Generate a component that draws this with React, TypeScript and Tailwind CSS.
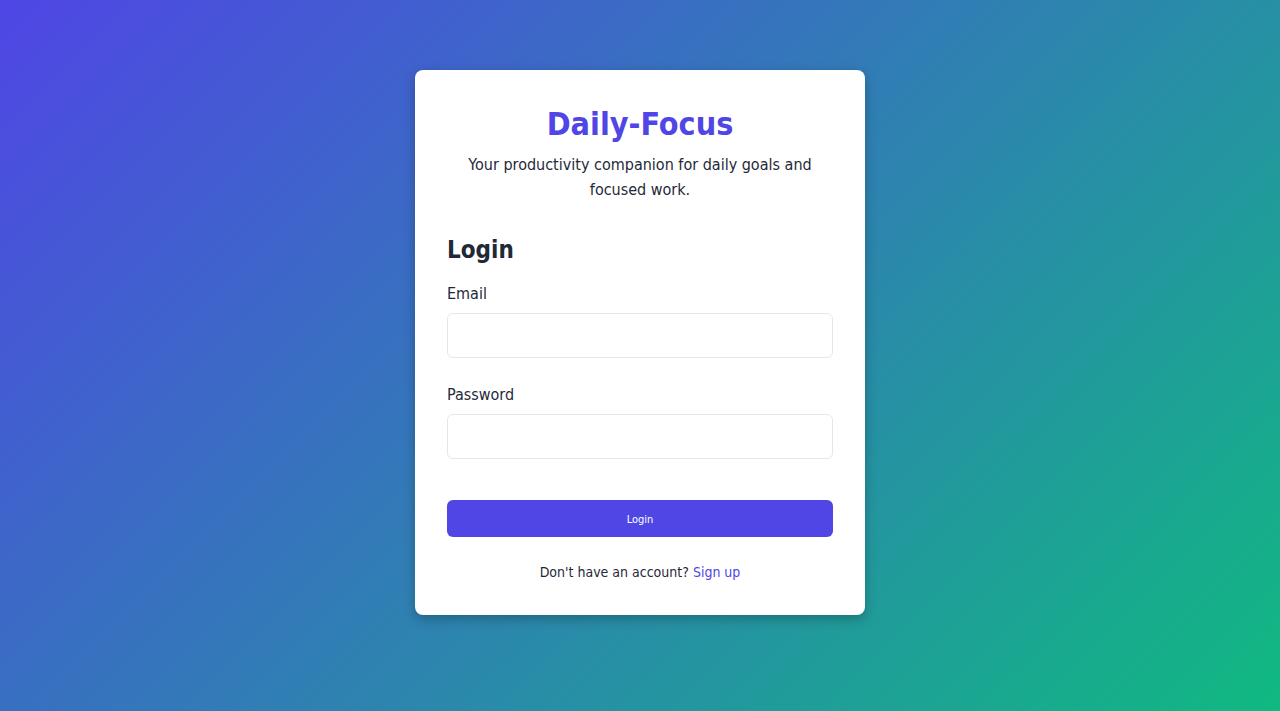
import React from "react";

export default function App() {
  return (
    <div
      className="min-h-[711px] w-full bg-[linear-gradient(135deg,#4f46e5_0%,#10b981_100%)] pt-[70px]"
      style={{ fontFamily: '"DejaVu Sans Condensed", "DejaVu Sans", sans-serif' }}
    >
      <div className="mx-auto w-[450px] rounded-lg bg-white px-8 pt-[34px] pb-[33px] shadow-[0_4px_12px_rgba(0,0,0,0.25)]">
        <div className="mb-8 text-center">
          <h1 className="text-[32px] leading-[40px] font-bold text-[#4f46e5]">Daily-Focus</h1>
          <p className="mt-2 text-[16px] leading-[25px] text-[#1f2937]">
            Your productivity companion for daily goals and focused work.
          </p>
        </div>
        <h2 className="mb-4 text-[24px] leading-[32px] font-bold text-[#1f2937]">Login</h2>
        <form onSubmit={(e) => e.preventDefault()}>
          <div className="mb-[25px]">
            <label className="mb-[7px] block text-[16px] leading-[24px] text-[#1f2937]">Email</label>
            <input
              type="email"
              className="block h-[45px] w-full rounded-md border border-[#e5e7eb] bg-white px-3 outline-none"
            />
          </div>
          <div>
            <label className="mb-[7px] block text-[16px] leading-[24px] text-[#1f2937]">Password</label>
            <input
              type="password"
              className="block h-[45px] w-full rounded-md border border-[#e5e7eb] bg-white px-3 outline-none"
            />
          </div>
          <button
            type="submit"
            className="mt-[41px] block h-[37px] w-full rounded-md bg-[#4f46e5] pt-[3px] text-[11px] font-medium text-white"
          >
            Login
          </button>
        </form>
        <p className="mt-[25px] text-center text-[14px] leading-[20px] text-[#1f2937]">
          Don't have an account? <a className="text-[#4f46e5]" href="#">Sign up</a>
        </p>
      </div>
    </div>
  );
}
